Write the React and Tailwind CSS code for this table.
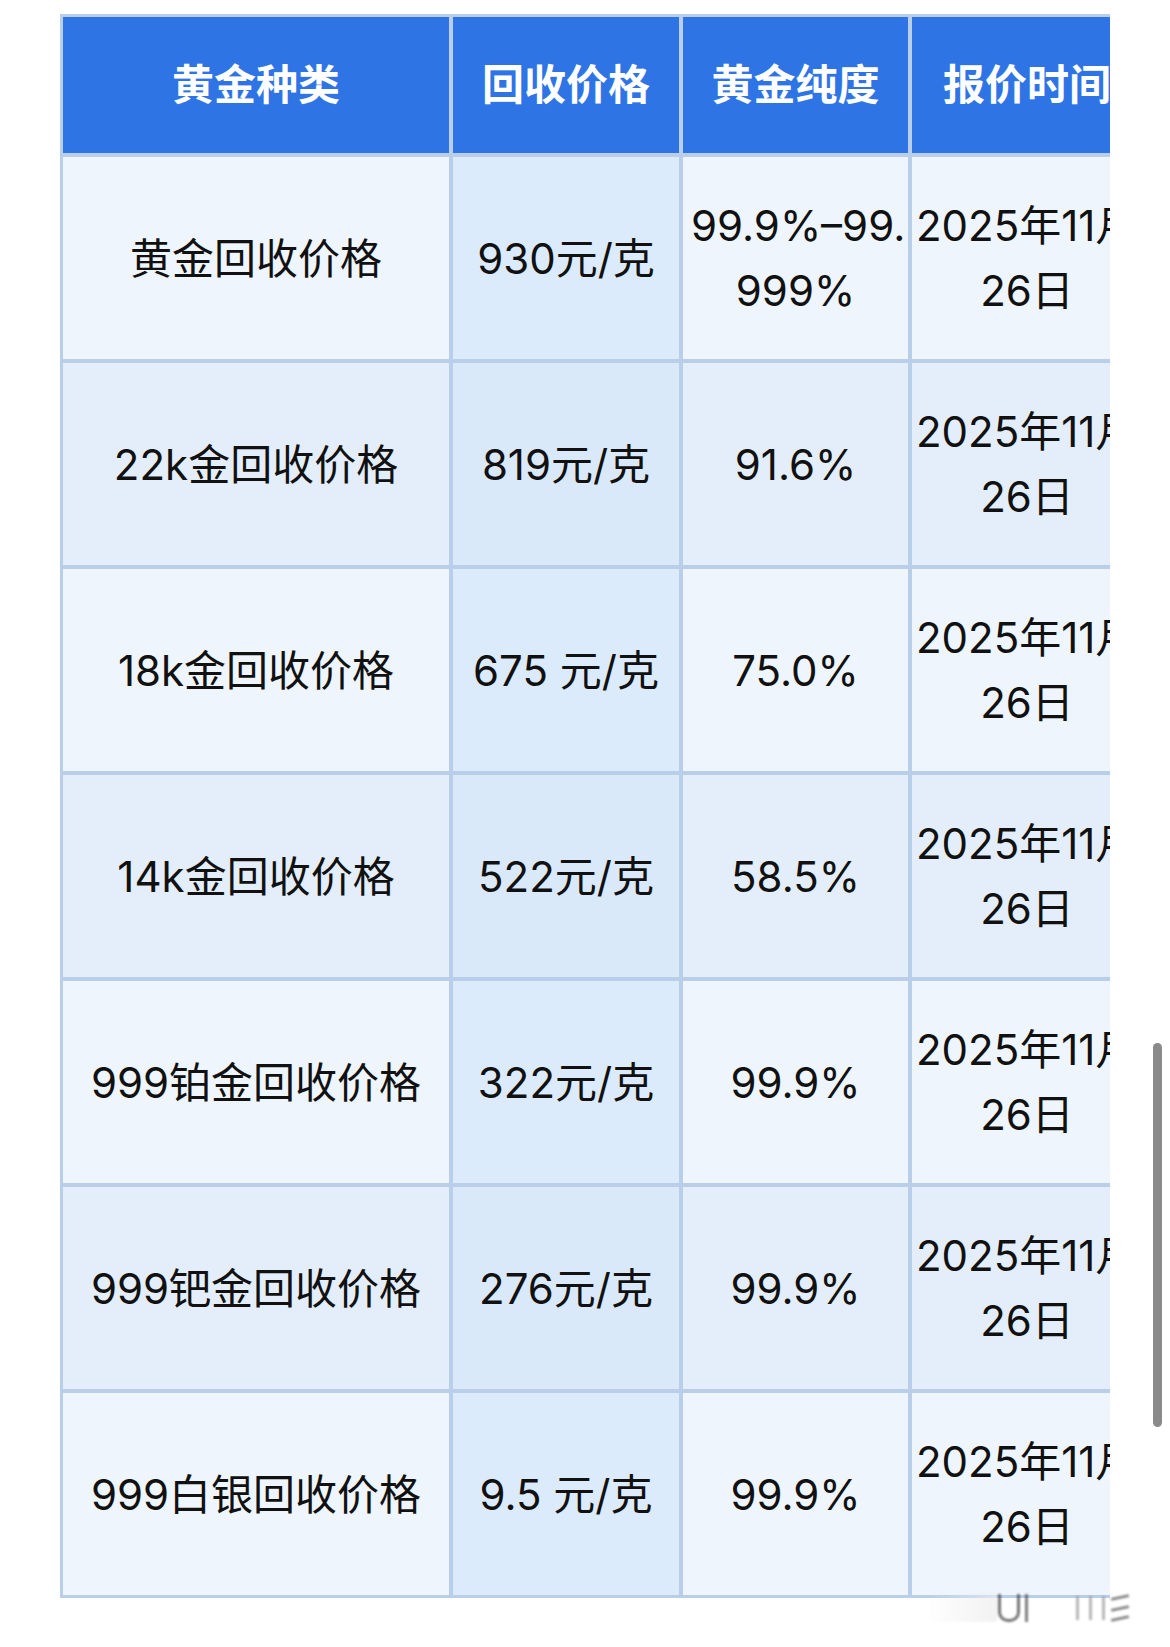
import React from "react";

const rows = [
  ["黄金回收价格", "930元/克", ["99.9%–99.", "999%"]],
  ["22k金回收价格", "819元/克", ["91.6%"]],
  ["18k金回收价格", "675 元/克", ["75.0%"]],
  ["14k金回收价格", "522元/克", ["58.5%"]],
  ["999铂金回收价格", "322元/克", ["99.9%"]],
  ["999钯金回收价格", "276元/克", ["99.9%"]],
  ["999白银回收价格", "9.5 元/克", ["99.9%"]],
];

const font = {
  fontFamily: '"Inter", "Noto Sans CJK SC", sans-serif',
};

function Cell({ children, bg, pad = "px-[8px]" }) {
  return (
    <div className={`flex h-[202px] items-center ${pad} ${bg}`}>
      <div className="w-full text-center text-[42px] leading-[65px] text-[#111111]">
        {children}
      </div>
    </div>
  );
}

function Head({ children }) {
  return (
    <div className="flex h-[136px] items-center bg-[#2f74e5] px-[8px]">
      <div className="w-full whitespace-nowrap text-center text-[42px] font-semibold leading-[60px] text-white">
        {children}
      </div>
    </div>
  );
}

export default function App() {
  return (
    <div className="relative min-h-[1647px] w-[1170px] overflow-hidden bg-white" style={font}>
      <div className="ml-[60px] pt-[14px]">
        <div className="w-[1050px] overflow-hidden">
          <div className="grid w-max grid-cols-[386px_226px_225px_230px] gap-[4px] bg-[#b8cee9] p-[3px]">
            <Head>黄金种类</Head>
            <Head>回收价格</Head>
            <Head>黄金纯度</Head>
            <Head>报价时间</Head>
            {rows.map((r, i) => {
              const odd = i % 2 === 0;
              const light = odd ? "bg-[#eef5fd]" : "bg-[#e3eefa]";
              const mid = odd ? "bg-[#dcebfb]" : "bg-[#dae9fa]";
              return (
                <React.Fragment key={i}>
                  <Cell bg={light}>
                    <span className="whitespace-nowrap">{r[0]}</span>
                  </Cell>
                  <Cell bg={mid}>
                    <span className="whitespace-pre">{r[1]}</span>
                  </Cell>
                  <Cell bg={light}>
                    {r[2].map((l, j) => (
                      <div key={j} className="whitespace-nowrap">
                        {l}
                      </div>
                    ))}
                  </Cell>
                  <Cell bg={light} pad="pl-[4px] pr-[8px]">
                    <div className="whitespace-nowrap">2025年11月</div>
                    <div className="whitespace-nowrap pl-[4px]">26日</div>
                  </Cell>
                </React.Fragment>
              );
            })}
          </div>
        </div>
      </div>

      {/* scrollbar */}
      <div className="absolute left-[1153px] top-[1043px] h-[384px] w-[9px] rounded-full bg-[#8a8a8a]" />

      {/* watermark */}
      <div className="absolute left-[927px] top-[1592px] flex h-[32px] items-center opacity-70 blur-[1.2px]">
        <div className="h-[28px] w-[70px] bg-gradient-to-r from-transparent to-[#ececec]" />
        <div className="ml-[1px] h-[28px] w-[22px] rounded-b-[10px] border-[3px] border-t-0 border-[#3a3a3a]" />
        <div className="ml-[5px] h-[28px] w-[3px] bg-[#4a4a4a]" />
        <div className="ml-[48px] h-[24px] w-[3px] bg-[#9a9a9a]" />
        <div className="ml-[10px] h-[24px] w-[3px] bg-[#9a9a9a]" />
        <div className="ml-[10px] h-[24px] w-[3px] bg-[#9a9a9a]" />
        <div className="ml-[6px] flex h-[24px] w-[18px] flex-col justify-between">
          <div className="h-[3px] w-full -rotate-12 bg-[#555]" />
          <div className="h-[3px] w-full -rotate-12 bg-[#555]" />
          <div className="h-[3px] w-full -rotate-12 bg-[#555]" />
        </div>
      </div>
    </div>
  );
}
